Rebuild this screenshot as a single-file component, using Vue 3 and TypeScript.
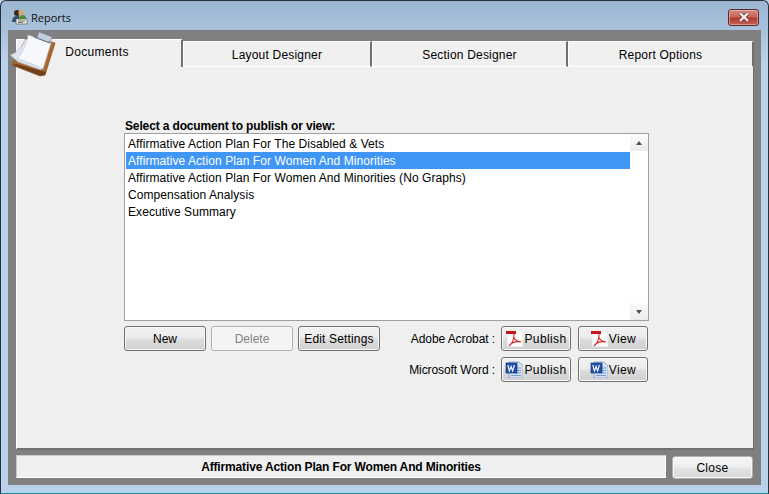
<script setup lang="ts">
const tabs = ['Layout Designer', 'Section Designer', 'Report Options']
const docs = [
  'Affirmative Action Plan For The Disabled & Vets',
  'Affirmative Action Plan For Women And Minorities',
  'Affirmative Action Plan For Women And Minorities (No Graphs)',
  'Compensation Analysis',
  'Executive Summary',
]
const selected = 1
</script>

<template>
  <div class="window">
    <header class="titlebar">
      <svg class="app-icon" width="17" height="16" viewBox="0 0 17 16">
        <circle cx="6" cy="4" r="3" fill="#3a2a1c" />
        <circle cx="10" cy="3.500" r="2.600" fill="#d8a860" />
        <path d="M1 13c0-4 2-6 5-6s4 2 4 6z" fill="#33506e" />
        <path d="M8 9c0-2 2-3 4-3s3 1 3 3v2H8z" fill="#5c8a3c" />
        <rect x="5" y="10" width="11" height="5" fill="#e6e6e0" stroke="#5a5a50" stroke-width=".6" />
        <path d="M7 12h7M7 13.500h5" stroke="#555" stroke-width=".8" />
      </svg>
      <span class="title">Reports</span>
      <button class="win-close" aria-label="Close window">
        <svg width="16" height="10" viewBox="0 0 16 10">
          <path d="M4 1.200l8 7.600M12 1.200l-8 7.600" stroke="#5a2a24" stroke-width="3.600" />
          <path d="M4 1.200l8 7.600M12 1.200l-8 7.600" stroke="#f4ecea" stroke-width="2.400" />
        </svg>
      </button>
    </header>

    <div class="client">
      <div class="tabstrip">
        <div class="tab active">Documents</div>
        <div v-for="t in tabs" :key="t" class="tab">{{ t }}</div>
      </div>

      <svg class="clipboard" width="46" height="46" viewBox="0 0 46 46">
        <path d="M17 5L45 11 35 43l-5 1L2 33z" fill="#a9682c" stroke="#7c4c22" stroke-width=".7" />
        <path d="M3 33l27 10.500 5-.5 1-3-30-8z" fill="#6f4019" />
        <path d="M15 7l24 7-8 24L8 30 0 23C7 21 13 14 15 7z" fill="#dfe3ee" stroke="#a4aab8" stroke-width=".6" />
        <path d="M18 3l23 8-8 26C25 33 15 29 7 27c5-6 10-15 11-24z" fill="#f7f8fc" stroke="#b8bfcd" stroke-width=".6" />
        <path d="M27 6L29 0l13 5-1 4-4 1z" fill="#c4cfdd" stroke="#7d8898" stroke-width=".6" />
        <path d="M24 5l16 6" stroke="#6a7a8c" stroke-width="1.200" />
      </svg>

      <main class="panel">
        <section class="picker">
          <label class="caption">Select a document to publish or view:</label>
          <div class="listbox">
            <ul class="items">
              <li v-for="(d, i) in docs" :key="d" :class="{ sel: i === selected }">{{ d }}</li>
            </ul>
            <div class="scrollbar">
              <span class="sb-btn"><span class="arrow up"></span></span>
              <span class="sb-btn"><span class="arrow down"></span></span>
            </div>
          </div>

          <div class="actions">
            <div class="left-buttons">
              <button class="btn wide">New</button>
              <button class="btn wide disabled">Delete</button>
              <button class="btn wide edit">Edit Settings</button>
            </div>
            <div class="publish-grid">
              <span class="pub-label">Adobe Acrobat :</span>
              <button class="btn pub">
                <svg class="ico" width="18" height="17" viewBox="0 0 18 17">
                  <path d="M2 0h13l3 3v14H2z" fill="#fbfbfb" stroke="#dcdcdc" stroke-width=".7" />
                  <rect x="1" y="1" width="10" height="3" fill="#c8141c" />
                  <path d="M9 4c-1 4 1 7 7 8-5-1-9 0-12 4 3-2 5-6 5-12z" fill="none" stroke="#cf2a2a" stroke-width="1.100" />
                </svg>
                Publish
              </button>
              <button class="btn pub">
                <svg class="ico" width="18" height="17" viewBox="0 0 18 17">
                  <path d="M2 0h13l3 3v14H2z" fill="#fbfbfb" stroke="#dcdcdc" stroke-width=".7" />
                  <rect x="1" y="1" width="10" height="3" fill="#c8141c" />
                  <path d="M9 4c-1 4 1 7 7 8-5-1-9 0-12 4 3-2 5-6 5-12z" fill="none" stroke="#cf2a2a" stroke-width="1.100" />
                </svg>
                View
              </button>
              <span class="pub-label">Microsoft Word :</span>
              <button class="btn pub">
                <svg class="ico" width="18" height="17" viewBox="0 0 18 17">
                  <path d="M4 1h10l4 4v12H4z" fill="#d3e2f5" stroke="#7d9cc8" stroke-width=".8" />
                  <path d="M11 7h5M11 9.500h5M11 12h5M6 14.500h10" stroke="#6f92c4" stroke-width=".9" />
                  <rect x="1" y="2" width="11" height="10" fill="#2350a8" stroke="#16357a" stroke-width=".7" />
                  <path d="M2.800 4l1.600 6 1.700-4.500 1.500 4.500 1.800-6" fill="none" stroke="#fff" stroke-width="1.100" />
                </svg>
                Publish
              </button>
              <button class="btn pub">
                <svg class="ico" width="18" height="17" viewBox="0 0 18 17">
                  <path d="M4 1h10l4 4v12H4z" fill="#d3e2f5" stroke="#7d9cc8" stroke-width=".8" />
                  <path d="M11 7h5M11 9.500h5M11 12h5M6 14.500h10" stroke="#6f92c4" stroke-width=".9" />
                  <rect x="1" y="2" width="11" height="10" fill="#2350a8" stroke="#16357a" stroke-width=".7" />
                  <path d="M2.800 4l1.600 6 1.700-4.500 1.500 4.500 1.800-6" fill="none" stroke="#fff" stroke-width="1.100" />
                </svg>
                View
              </button>
            </div>
          </div>
        </section>
      </main>

      <footer class="statusrow">
        <div class="status">Affirmative Action Plan For Women And Minorities</div>
        <button class="btn close">Close</button>
      </footer>
    </div>
  </div>
</template>

<style>
html, body { margin: 0; background: #b9d1ea; }
</style>

<style scoped>
* { box-sizing: border-box; }
.window {
  width: 769px;
  height: 494px;
  display: flex;
  flex-direction: column;
  padding: 0 7px 8px;
  background: linear-gradient(180deg, #9cb6d3 0, #a9c2dc 30px, #b9d1ea 60px);
  border: 1px solid #27313a;
  border-bottom-color: #1a8f96;
  border-radius: 6px 6px 0 0;
  font: 12px "Liberation Sans", Arial, sans-serif;
  color: #000;
  overflow: hidden;
}
.titlebar {
  height: 29px;
  flex: none;
  display: flex;
  align-items: center;
  padding: 6px 1px 0 3px;
}
.app-icon { margin-right: 3px; margin-top: -3px; }
.title {
  font: 11px "Open Sans", sans-serif;
  color: #101010;
  margin-top: -2px;
}
.win-close {
  margin-left: auto;
  margin-top: -3px;
  margin-right: 1px;
  width: 31px;
  height: 17px;
  padding: 0;
  display: flex;
  align-items: center;
  justify-content: center;
  border: 1px solid #5c2a2a;
  border-radius: 3px;
  background: linear-gradient(180deg, #d38a80 0, #c8675c 45%, #b23a2e 55%, #c4645a 100%);
  box-shadow: inset 0 0 0 1px rgba(255, 255, 255, .35);
}
.client {
  position: relative;
  flex: 1;
  width: 753px;
  background: #808080;
  padding: 9px 7px 6px 8px;
  display: flex;
  flex-direction: column;
}
.tabstrip {
  display: grid;
  grid-template-columns: 167px 189px 196px 186px;
  height: 28px;
  flex: none;
  position: relative;
  z-index: 1;
}
.tab {
  margin-top: 2px;
  background: #f0f0f0;
  border-top: 1px solid #fff;
  border-left: 1px solid #fff;
  border-right: 2px solid #707070;
  border-bottom: 1px solid #fff;
  display: flex;
  align-items: center;
  justify-content: center;
  padding-top: 1px;
  height: 26px;
  letter-spacing: .2px;
}
.tab.active {
  margin-top: 0;
  height: 28px;
  border-bottom: 0;
  padding: 0 4px 3px 0;
  background: #efefef;
  letter-spacing: .3px;
}
.clipboard {
  position: absolute;
  left: 2px;
  top: 2px;
  z-index: 2;
}
.panel {
  flex: 1;
  background: #efefef;
  border-left: 1px solid #fff;
  border-bottom: 2px solid #707070;
  border-right: 1px solid #707070;
  display: flex;
  justify-content: center;
  padding: 52px 0 0 3px;
}
.picker { width: 525px; }
.caption {
  display: block;
  font-weight: bold;
  height: 14px;
  line-height: 14px;
  letter-spacing: -.14px;
  padding-left: 1px;
}
.listbox {
  height: 188px;
  border: 1px solid #a0a0a0;
  background: #fff;
  display: flex;
}
.items {
  list-style: none;
  margin: 0;
  padding: 1px 0 0 1px;
  flex: 1;
}
.items li {
  height: 17px;
  line-height: 19px;
  padding-left: 2px;
  white-space: nowrap;
  letter-spacing: .07px;
}
.items li.sel {
  background: #3f96f5;
  color: #fff;
}
.scrollbar {
  width: 18px;
  flex: none;
  background: #fff;
  display: flex;
  flex-direction: column;
  justify-content: space-between;
}
.sb-btn {
  height: 17px;
  display: flex;
  align-items: center;
  justify-content: center;
  background: linear-gradient(180deg, #fbfbfb, #ececec);
}
.arrow {
  width: 0;
  height: 0;
  border-left: 3.500px solid transparent;
  border-right: 3.500px solid transparent;
}
.arrow.up { border-bottom: 4px solid #505050; }
.arrow.down { border-top: 4px solid #505050; }
.actions {
  display: flex;
  justify-content: space-between;
  margin: 5px 1px 0 0;
}
.left-buttons {
  display: grid;
  grid-template-columns: 82px 82px 82px;
  column-gap: 5px;
  height: 25px;
}
.btn {
  font: 12px "Liberation Sans", Arial, sans-serif;
  color: #000;
  height: 25px;
  padding: 0;
  border: 1px solid #707070;
  border-radius: 3px;
  background: linear-gradient(180deg, #f2f2f2 0, #ebebeb 47%, #dddddd 52%, #cfcfcf 100%);
  box-shadow: inset 0 0 0 1px #f8f8f8;
  display: flex;
  align-items: center;
  justify-content: center;
}
.btn.edit { letter-spacing: .15px; }
.btn.disabled {
  background: #f4f4f4;
  border-color: #adb2b5;
  color: #838383;
}
.publish-grid {
  display: grid;
  grid-template-columns: auto 70px 70px;
  column-gap: 7px;
  row-gap: 6px;
  align-items: center;
  justify-items: end;
}
.pub-label { margin-right: -1px; white-space: nowrap; letter-spacing: -.08px; }
.publish-grid .pub { width: 70px; gap: 1px; letter-spacing: .4px; }
.ico { flex: none; }
.statusrow {
  display: flex;
  justify-content: space-between;
  margin-top: 5px;
  height: 24px;
  flex: none;
}
.status {
  width: 650px;
  height: 23px;
  background: #efefef;
  border-top: 1px solid #c8c8c8;
  border-left: 1px solid #c8c8c8;
  border-right: 1px solid #fff;
  border-bottom: 1px solid #fff;
  display: flex;
  align-items: center;
  justify-content: center;
  font-weight: bold;
  letter-spacing: -.15px;
}
.btn.close {
  width: 81px;
  height: 23px;
  margin: 1px 1px 0 0;
  border-color: #b0b0b0;
  background: linear-gradient(180deg, #f6f6f6 0, #efefef 47%, #e4e4e4 52%, #d8d8d8 100%);
  letter-spacing: .3px;
}
</style>
